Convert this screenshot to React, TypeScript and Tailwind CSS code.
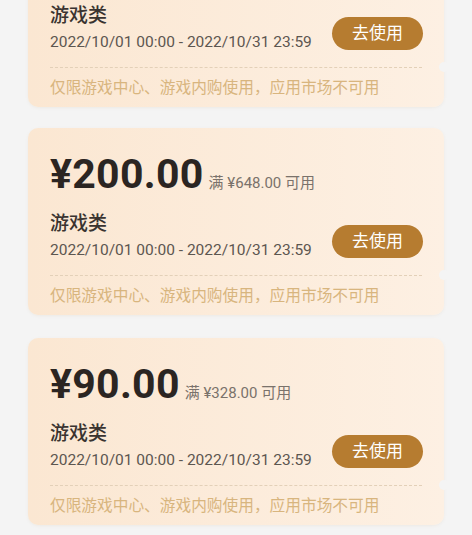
const coupons = [
  { amount: "¥200.00", min: "满 ¥648.00 可用" },
  { amount: "¥200.00", min: "满 ¥648.00 可用" },
  { amount: "¥90.00", min: "满 ¥328.00 可用" },
];

function Coupon({ amount, min, index }: { amount: string; min: string; index: number }) {
  const offset = index === 0 ? "-mt-[80px]" : index === 1 ? "mt-[21px]" : "mt-[23px]";
  return (
    <div
      className={`relative mx-[28px] rounded-[10px] bg-gradient-to-r from-[#fbe7d2] to-[#fdf0e3] shadow-[0_1px_3px_rgba(200,170,130,0.12)] ${offset}`}
    >
      <div className="px-[22px] pt-[24px]">
        <div className="flex items-baseline gap-[5px]">
          <span className="text-[41px] font-bold leading-[44px] tracking-[0.3px] text-[#2b2522]">{amount}</span>
          <span className="text-[15px] text-[#7a726b]">{min}</span>
        </div>
        <div className="mt-[16px] flex items-end justify-between">
          <div>
            <div className="text-[19px] font-medium leading-[24px] text-[#3a3330]">游戏类</div>
            <div className="mt-[6px] text-[15.5px] leading-[16px] text-[#5c5650]">
              2022/10/01 00:00 - 2022/10/31 23:59
            </div>
          </div>
          <button className="mr-[-1px] flex h-[33px] w-[91px] items-center justify-center rounded-full bg-[#b67c30] text-[17px] text-white">
            去使用
          </button>
        </div>
      </div>
      <div className="relative mt-[17px] px-[22px]">
        <div className="border-t border-dashed border-[#e3d0b8]" />
        <div className="absolute -right-[5px] -top-[5px] h-[10px] w-[10px] rounded-full bg-[#f4f4f4]" />
      </div>
      <div className="px-[22px] pb-[8px] pt-[9px] text-[15.7px] leading-[22px] text-[#d8b57e]">
        仅限游戏中心、游戏内购使用，应用市场不可用
      </div>
    </div>
  );
}

export default function App() {
  return (
    <div
      className="h-[535px] overflow-hidden bg-[#f4f4f4]"
      style={{ fontFamily: 'Roboto, "Noto Sans CJK SC", sans-serif' }}
    >
      {coupons.map((c, i) => (
        <Coupon key={i} amount={c.amount} min={c.min} index={i} />
      ))}
    </div>
  );
}
